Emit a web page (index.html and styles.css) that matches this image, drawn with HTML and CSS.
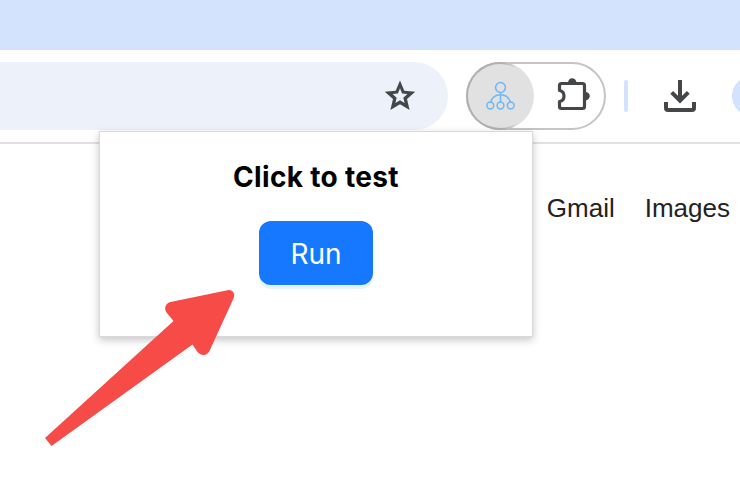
FILE: index.html
```html
<!DOCTYPE html>
<html lang="en">
<head>
<meta charset="utf-8">
<title>Extension popup</title>
<link rel="stylesheet" href="styles.css">
</head>
<body>
<div class="tabstrip"></div>
<header class="toolbar">
  <div class="address">
    <svg class="star" viewBox="0 0 30 30"><path d="M15 -.5L19.300 9.700L30.300 10.700L22 18L24.600 29L15 23.200L5.400 29L8 18L-.3 10.700L10.700 9.700ZM15 7.200L12.900 12.400L7.600 12.900L11.700 16.700L10.400 22L15 19.200L19.600 22L18.300 16.700L22.400 12.900L17.100 12.400Z" fill="#444648" fill-rule="evenodd"/></svg>
  </div>
  <div class="extensions">
    <div class="active-ext">
      <svg class="tree" viewBox="0 0 30 30" fill="none" stroke="#6bb8f7" stroke-width="1.5"><circle cx="15.500" cy="6.500" r="4.900"/><path d="M15.500 11.300v10M5.500 21.500C7 16.500 10.500 13.800 15.500 13.800S24 16.500 25.500 21.500"/><circle cx="5.300" cy="24.500" r="3.400"/><circle cx="15.500" cy="24.500" r="3.400"/><circle cx="25.700" cy="24.500" r="3.400"/></svg>
    </div>
    <svg class="puzzle" viewBox="0 0 34 34"><path d="M3.500 11.500V6.500Q3.500 4.500 5.500 4.500H26.500Q28.500 4.500 28.500 6.500V27.500Q28.500 29.500 26.500 29.500H5.500Q3.500 29.500 3.500 27.500V22.500C9.500 21.500 9.500 12.500 3.500 11.500Z" fill="none" stroke="#444648" stroke-width="3.200" stroke-linejoin="round"/><path d="M12 3.500a4.200 4.300 0 0 1 8.400 0ZM29.500 12.900a4.300 4.200 0 0 1 0 8.400Z" fill="#444648"/></svg>
  </div>
  <div class="divider"></div>
  <svg class="download" viewBox="0 0 32 32" fill="none" stroke="#444648" stroke-width="4"><path d="M16 0V21"/><path d="M7.700 12.300L16 20.600L24.300 12.300"/><path d="M2 22V28Q2 30 4 30H28Q30 30 30 28V22"/></svg>
  <div class="avatar"></div>
</header>
<main class="page">
  <nav class="links"><a>Gmail</a><a>Images</a></nav>
</main>
<section class="popup">
  <h1 class="title">Click to test</h1>
  <button class="run">Run</button>
</section>
<svg class="arrow" viewBox="0 0 200 164"><path d="M5 149L133.500 32L126.500 23.500C123.500 19 126 14 130.500 13L187.500 1.200C192.500 .2 195.600 4.500 193.700 9L169.500 62C167 67 161 67 157.500 63L152.500 55.500L11.500 157Z" fill="#f74b48"/></svg>
</body>
</html>
```
FILE: styles.css
```css
* { box-sizing: border-box; }
body {
  margin: 0;
  width: 740px;
  height: 504px;
  overflow: hidden;
  position: relative;
  background: #fff;
  font-family: Inter, sans-serif;
}
svg { display: block; flex: none; overflow: visible; }
.tabstrip { height: 50px; background: #d3e2fd; }
.toolbar {
  height: 94px;
  border-bottom: 2px solid #e1e1e1;
  display: flex;
  align-items: center;
  overflow: hidden;
}
.address {
  flex: none;
  width: 448px;
  height: 68px;
  padding-right: 33px;
  border-radius: 0 34px 34px 0;
  background: #ecf1fa;
  display: flex;
  align-items: center;
  justify-content: flex-end;
}
.star { width: 30px; height: 30px; }
.extensions {
  flex: none;
  width: 140px;
  height: 68px;
  margin-left: 18px;
  border: 2px solid #c4c4c4;
  border-radius: 34px;
  display: flex;
  align-items: center;
}
.active-ext {
  flex: none;
  width: 68px;
  height: 68px;
  margin-left: -2px;
  border: 2px solid transparent;
  border-radius: 50%;
  background:
    linear-gradient(#e1e1e1, #e1e1e1) padding-box,
    linear-gradient(90deg, #b0b0b0 55%, #e1e1e1 75%) border-box;
  display: flex;
  align-items: center;
  justify-content: center;
}
.tree { width: 30px; height: 30px; }
.puzzle { width: 34px; height: 34px; margin-left: 22px; }
.divider {
  flex: none;
  width: 4px;
  height: 32px;
  margin-left: 18px;
  border-radius: 2px;
  background: #d3e2fd;
}
.download { width: 32px; height: 32px; margin-left: 36px; }
.avatar {
  flex: none;
  width: 40px;
  height: 40px;
  margin-left: 36px;
  border-radius: 50%;
  background: #d3e2fd;
}
.page { padding: 49px 10px 0; }
.links {
  display: flex;
  justify-content: flex-end;
  gap: 30px;
  font: 26px/30px "Liberation Sans", sans-serif;
  color: #222;
}
.popup {
  position: absolute;
  left: 99px;
  top: 131px;
  width: 434px;
  height: 206px;
  padding-top: 28px;
  border: 1px solid #d9d9dc;
  background: #fff;
  box-shadow: 0 3px 8px rgba(0, 0, 0, .23);
  display: flex;
  flex-direction: column;
  align-items: center;
}
.title {
  margin: 0;
  font-size: 28px;
  line-height: 34px;
  font-weight: 700;
  letter-spacing: .33px;
  color: #000;
}
.run {
  width: 114px;
  height: 64px;
  margin-top: 27px;
  padding: 2px 0 0;
  border: 0;
  border-radius: 12px;
  background: #1677ff;
  box-shadow: 0 4px 0 rgba(5, 145, 255, .1);
  color: #fff;
  font: 400 28px/34px Inter, sans-serif;
}
.arrow {
  position: absolute;
  left: 40px;
  top: 289px;
  width: 200px;
  height: 164px;
}
```
